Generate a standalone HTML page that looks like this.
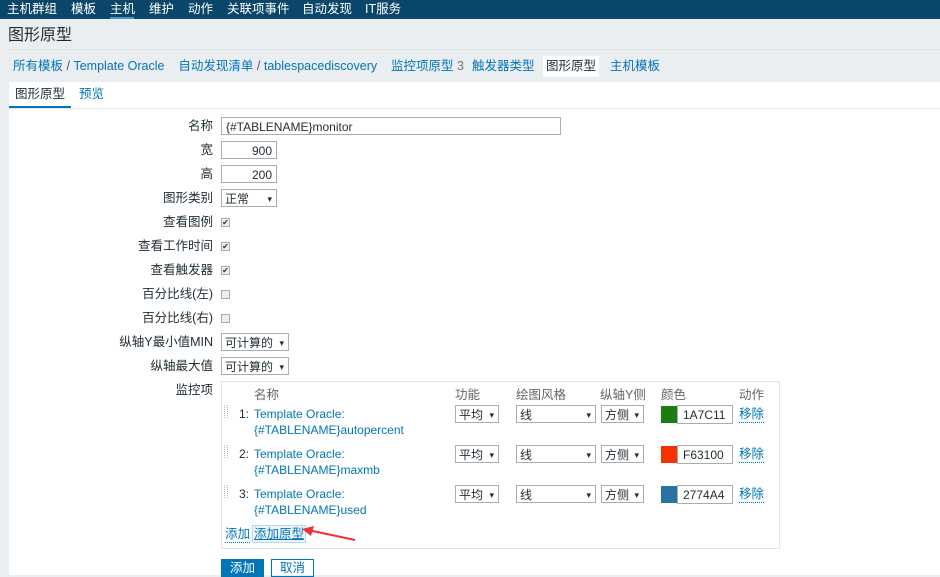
<!DOCTYPE html>
<html><head><meta charset="utf-8"><style>
*{margin:0;padding:0;box-sizing:border-box}
body{width:940px;height:575px;overflow:hidden;background:#ebeef0;font-family:"Liberation Sans","Noto Sans CJK SC",sans-serif;font-size:12px;line-height:17px;color:#1f2c33;position:relative}
.a{position:absolute;white-space:nowrap}
.nav{position:absolute;left:0;top:0;width:940px;height:19px;background:#0a466a}
.nav span{position:absolute;top:1px;color:#fff;font-size:12.5px}
a,.lk{color:#0275b8;text-decoration:none}
.white{position:absolute;left:9px;top:82px;width:931px;height:493px;background:#fff}
.lbl{position:absolute;right:727px;white-space:nowrap;font-size:12.5px}
.inp{position:absolute;border:1px solid #acacac;background:#fff;height:18px;font-size:12px;line-height:14px;padding:2px 4px 0;white-space:nowrap}
.sel{position:absolute;border:1px solid #acacac;background:#fff;height:18px;font-size:12px;line-height:14px;padding:2px 3px 0;white-space:nowrap}
.sel:after{content:"▾";position:absolute;right:4px;top:2px;font-size:9px}
.cb{position:absolute;left:221px;width:9px;height:9px;border:1px solid #aaa;background:#eee;font-size:8px;line-height:7px;text-align:center;color:#333}
.hd{position:absolute;top:387px;color:#666;font-size:12.5px}
.it{position:absolute;left:254px;color:#0275b8;font-size:12px;line-height:16px}
.num{position:absolute;left:239px;font-size:12px}
.drag{position:absolute;left:224px;width:4px;height:13px;border-left:1px dotted #bbb;border-right:1px dotted #bbb}
.sw{position:absolute;left:661px;width:17px;height:17px}
.hx{position:absolute;left:677px;width:56px;height:19px;border:1px solid #acacac;font-size:12px;line-height:14px;padding:2px 0 0 5px}
.rm{position:absolute;left:739px;color:#0275b8;border-bottom:1px dotted #0275b8;font-size:12.5px;line-height:16px}
</style></head><body>
<div class="nav">
<span style="left:7px">主机群组</span><span style="left:71px">模板</span><span style="left:110px">主机</span><span style="left:149px">维护</span><span style="left:188px">动作</span><span style="left:227px">关联项事件</span><span style="left:302px">自动发现</span><span style="left:365px">IT服务</span>
<div style="position:absolute;left:110px;top:17px;width:24px;height:2px;background:#4796c4"></div>
</div>
<div class="a" style="left:8px;top:26px;font-size:16px;line-height:20px;color:#1f2c33">图形原型</div>
<div style="position:absolute;left:8px;top:49px;width:932px;height:1px;background:#dfe4e7"></div>
<div class="a" style="left:13px;top:58px;font-size:12.5px"><a>所有模板</a> <span style="color:#555">/</span> <a>Template Oracle</a>&nbsp;&nbsp;&nbsp; <a>自动发现清单</a> <span style="color:#555">/</span> <a>tablespacediscovery</a>&nbsp;&nbsp;&nbsp; <a>监控项原型</a> <span style="color:#777">3</span></div>
<div class="a" style="left:472px;top:58px;font-size:12.5px"><a>触发器类型</a></div>
<div class="a" style="left:543px;top:56px;background:#fff;padding:2px 3px;font-size:12.5px;color:#1f2c33">图形原型</div>
<div class="a" style="left:610px;top:58px;font-size:12.5px"><a>主机模板</a></div>
<div class="white"></div>
<div class="a" style="left:15px;top:86px;font-size:12.5px">图形原型</div>
<div class="a" style="left:79px;top:86px;font-size:12.5px;color:#0275b8">预览</div>
<div style="position:absolute;left:9px;top:106px;width:62px;height:2px;background:#0275b8"></div>
<div style="position:absolute;left:9px;top:108px;width:931px;height:1px;background:#e6e6e6"></div>

<div class="lbl" style="top:118px">名称</div><div class="inp" style="left:221px;top:117px;width:340px">{#TABLENAME}monitor</div>
<div class="lbl" style="top:142px">宽</div><div class="inp" style="left:221px;top:141px;width:56px;text-align:right">900</div>
<div class="lbl" style="top:166px">高</div><div class="inp" style="left:221px;top:165px;width:56px;text-align:right">200</div>
<div class="lbl" style="top:190px">图形类别</div><div class="sel" style="left:221px;top:189px;width:56px">正常</div>
<div class="lbl" style="top:214px">查看图例</div><div class="cb" style="top:218px">✔</div>
<div class="lbl" style="top:238px">查看工作时间</div><div class="cb" style="top:242px">✔</div>
<div class="lbl" style="top:262px">查看触发器</div><div class="cb" style="top:266px">✔</div>
<div class="lbl" style="top:286px">百分比线(左)</div><div class="cb" style="top:290px"></div>
<div class="lbl" style="top:310px">百分比线(右)</div><div class="cb" style="top:314px"></div>
<div class="lbl" style="top:334px">纵轴Y最小值MIN</div><div class="sel" style="left:221px;top:333px;width:68px">可计算的</div>
<div class="lbl" style="top:358px">纵轴最大值</div><div class="sel" style="left:221px;top:357px;width:68px">可计算的</div>
<div class="lbl" style="top:382px">监控项</div>

<div style="position:absolute;left:221px;top:381px;width:559px;height:168px;border:1px solid #e4e4e4"></div>
<div class="hd" style="left:254px">名称</div><div class="hd" style="left:455px">功能</div><div class="hd" style="left:516px">绘图风格</div><div class="hd" style="left:600px">纵轴Y侧</div><div class="hd" style="left:661px">颜色</div><div class="hd" style="left:739px">动作</div>

<div class="drag" style="top:405px"></div><div class="num" style="top:406px">1:</div>
<div class="it" style="top:406px">Template Oracle:<br>{#TABLENAME}autopercent</div>
<div class="sel" style="left:455px;top:405px;width:44px">平均</div><div class="sel" style="left:516px;top:405px;width:80px">线</div><div class="sel" style="left:601px;top:405px;width:43px">方侧</div>
<div class="sw" style="top:406px;background:#1a7c11"></div><div class="hx" style="top:405px">1A7C11</div><div class="rm" style="top:406px">移除</div>

<div class="drag" style="top:445px"></div><div class="num" style="top:446px">2:</div>
<div class="it" style="top:446px">Template Oracle:<br>{#TABLENAME}maxmb</div>
<div class="sel" style="left:455px;top:445px;width:44px">平均</div><div class="sel" style="left:516px;top:445px;width:80px">线</div><div class="sel" style="left:601px;top:445px;width:43px">方侧</div>
<div class="sw" style="top:446px;background:#f63100"></div><div class="hx" style="top:445px">F63100</div><div class="rm" style="top:446px">移除</div>

<div class="drag" style="top:485px"></div><div class="num" style="top:486px">3:</div>
<div class="it" style="top:486px">Template Oracle:<br>{#TABLENAME}used</div>
<div class="sel" style="left:455px;top:485px;width:44px">平均</div><div class="sel" style="left:516px;top:485px;width:80px">线</div><div class="sel" style="left:601px;top:485px;width:43px">方侧</div>
<div class="sw" style="top:486px;background:#2774a4"></div><div class="hx" style="top:485px">2774A4</div><div class="rm" style="top:486px">移除</div>

<div class="a" style="left:225px;top:526px;color:#0275b8;border-bottom:1px dotted #0275b8;font-size:12.5px;line-height:16px">添加</div>
<div class="a" style="left:252px;top:525px;color:#0275b8;border:1px solid #b8d8ee;background:#eef6fc;font-size:12.5px;line-height:16px;padding:0 1px;text-decoration:underline">添加原型</div>
<svg style="position:absolute;left:298px;top:524px" width="60" height="20"><line x1="57" y1="16" x2="10" y2="6" stroke="#e8333a" stroke-width="2"/><polygon points="4,5 16,2 13,12" fill="#e8333a"/></svg>

<div class="a" style="left:221px;top:559px;width:43px;height:18px;background:#0275b8;color:#fff;font-size:12.5px;text-align:center;line-height:18px">添加</div>
<div class="a" style="left:271px;top:559px;width:43px;height:18px;border:1px solid #0275b8;color:#0275b8;font-size:12.5px;text-align:center;line-height:16px">取消</div>
</body></html>
